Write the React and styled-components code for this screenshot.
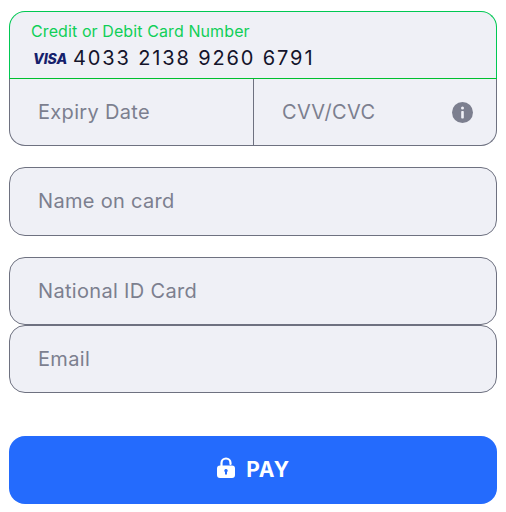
import React from 'react'
import styled, { createGlobalStyle } from 'styled-components'

const GlobalStyle = createGlobalStyle`
  html, body {
    margin: 0;
    padding: 0;
    background: #fff;
    font-family: Inter, "Liberation Sans", sans-serif;
  }
`

const Form = styled.form`
  width: 488px;
  margin-left: 9px;
  padding-top: 11px;
  display: flex;
  flex-direction: column;
`

const CardGroup = styled.div`
  display: flex;
  flex-direction: column;
  margin-bottom: 21px;
`

const CardNumberBox = styled.div`
  height: 68px;
  box-sizing: border-box;
  background: #eff0f6;
  border: 1px solid #00c853;
  border-bottom-color: #00c02f;
  border-radius: 16px 16px 0 0;
  padding: 10px 21px 0;
`

const FloatLabel = styled.div`
  font-size: 16px;
  line-height: 19px;
  letter-spacing: 0.1px;
  color: #10cf58;
`

const NumberRow = styled.div`
  display: flex;
  align-items: center;
  gap: 6px;
  margin-top: 3px;
`

const VisaMark = styled.span`
  font-size: 14px;
  font-weight: 800;
  font-style: italic;
  letter-spacing: -0.1px;
  color: #15206b;
  width: 35px;
  margin-left: 2px;
  margin-right: -1px;
`

const CardNumber = styled.span`
  font-size: 20px;
  line-height: 28px;
  letter-spacing: 1.87px;
  color: #14142b;
`

const SplitRow = styled.div`
  display: flex;
  height: 67px;
  box-sizing: border-box;
  background: #eff0f6;
  border: 1px solid #6e7180;
  border-top: none;
  border-radius: 0 0 16px 16px;
`

const SplitCell = styled.div`
  flex: ${(p) => p.$flex};
  box-sizing: border-box;
  display: flex;
  align-items: center;
  justify-content: space-between;
  padding: 0 23px 0 28px;
  & + & {
    border-left: 1px solid #6e7180;
  }
`

const Placeholder = styled.span`
  font-size: 20px;
  line-height: 28px;
  letter-spacing: 0.32px;
  color: #7c7f8f;
`

const InfoIcon = styled.svg`
  width: 21px;
  height: 21px;
  display: block;
`

const Field = styled.div`
  height: ${(p) => p.$height}px;
  box-sizing: border-box;
  display: flex;
  align-items: center;
  padding: 0 28px 1px;
  background: #eff0f6;
  border: 1px solid #6e7180;
  border-radius: 16px;
  margin-bottom: ${(p) => p.$gap}px;
`

const PayButton = styled.button`
  height: 68px;
  padding: 0 0 2px;
  border: none;
  border-radius: 16px;
  background: #246bfd;
  color: #fff;
  display: flex;
  align-items: center;
  justify-content: center;
  gap: 10px;
  font-family: inherit;
  font-size: 21px;
  font-weight: 700;
  letter-spacing: 0.8px;
`

const LockIcon = styled.svg`
  width: 20px;
  height: 22px;
  display: block;
  margin-top: -3px;
`

const App = () => {
  return (
    <>
      <GlobalStyle />
      <Form>
        <CardGroup>
          <CardNumberBox>
            <FloatLabel>Credit or Debit Card Number</FloatLabel>
            <NumberRow>
              <VisaMark>VISA</VisaMark>
              <CardNumber>4033 2138 9260 6791</CardNumber>
            </NumberRow>
          </CardNumberBox>
          <SplitRow>
            <SplitCell $flex="0 0 243px">
              <Placeholder>Expiry Date</Placeholder>
            </SplitCell>
            <SplitCell $flex="1">
              <Placeholder>CVV/CVC</Placeholder>
              <InfoIcon viewBox="0 0 21 21">
                <circle cx="10.5" cy="10.5" r="10.5" fill="#7c7f8f" />
                <rect x="9.2" y="9" width="2.6" height="7.5" rx="0.8" fill="#eff0f6" />
                <circle cx="10.5" cy="6" r="1.5" fill="#eff0f6" />
              </InfoIcon>
            </SplitCell>
          </SplitRow>
        </CardGroup>
        <Field $height={69} $gap={21}>
          <Placeholder>Name on card</Placeholder>
        </Field>
        <Field $height={68} $gap={0}>
          <Placeholder>National ID Card</Placeholder>
        </Field>
        <Field $height={68} $gap={43}>
          <Placeholder>Email</Placeholder>
        </Field>
        <PayButton type="button">
          <LockIcon viewBox="0 0 20 22">
            <path d="M5.500 9V6a4.500 4.500 0 0 1 9 0v1" fill="none" stroke="#fff" strokeWidth="2.200" strokeLinecap="round" />
            <path fillRule="evenodd" fill="#fff" d="M4 8.500h12a3 3 0 0 1 3 3V18a3 3 0 0 1-3 3H4a3 3 0 0 1-3-3v-6.500a3 3 0 0 1 3-3ZM10 12a1.700 1.700 0 0 0-1 3.100V17.500h2v-2.400A1.700 1.700 0 0 0 10 12Z" />
          </LockIcon>
          PAY
        </PayButton>
      </Form>
    </>
  )
}

export default App
